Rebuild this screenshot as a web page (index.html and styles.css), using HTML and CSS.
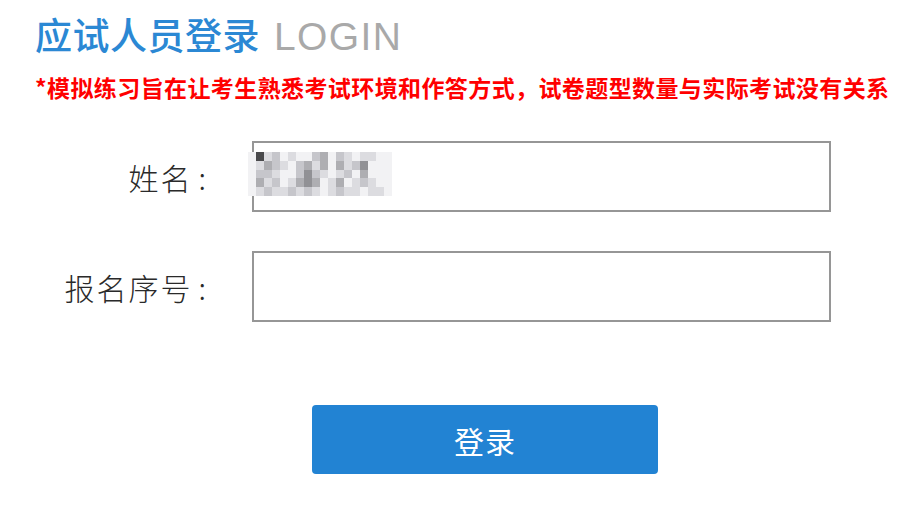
FILE: index.html
```html
<!DOCTYPE html>
<html lang="zh-CN">
<head>
<meta charset="utf-8">
<title>应试人员登录</title>
<link rel="stylesheet" href="styles.css">
</head>
<body>
<div class="page">
  <h1 class="title"><span class="title-cn">应试人员登录</span><span class="title-en">LOGIN</span></h1>
  <p class="notice">*模拟练习旨在让考生熟悉考试环境和作答方式，试卷题型数量与实际考试没有关系</p>
  <form class="form">
    <label class="label" for="name">姓名<span class="colon">:</span></label>
    <div class="field">
      <input class="input" id="name" type="text">
      <div class="mosaic">
        <span class="m0"></span><span class="m5"></span><span class="m1"></span><span class="m2"></span><span class="m0"></span><span class="m1"></span><span class="m0"></span><span class="m0"></span><span class="m2"></span><span class="m3"></span><span class="m0"></span><span class="m2"></span><span class="m1"></span><span class="m0"></span><span class="m1"></span><span class="m1"></span><span class="m0"></span><span class="m0"></span>
        <span class="m0"></span><span class="m1"></span><span class="m3"></span><span class="m2"></span><span class="m1"></span><span class="m0"></span><span class="m2"></span><span class="m3"></span><span class="m1"></span><span class="m3"></span><span class="m0"></span><span class="m3"></span><span class="m1"></span><span class="m2"></span><span class="m4"></span><span class="m0"></span><span class="m0"></span><span class="m0"></span>
        <span class="m0"></span><span class="m2"></span><span class="m2"></span><span class="m1"></span><span class="m0"></span><span class="m0"></span><span class="m2"></span><span class="m4"></span><span class="m2"></span><span class="m1"></span><span class="m0"></span><span class="m1"></span><span class="m2"></span><span class="m0"></span><span class="m3"></span><span class="m0"></span><span class="m0"></span><span class="m0"></span>
        <span class="m0"></span><span class="m3"></span><span class="m1"></span><span class="m2"></span><span class="m0"></span><span class="m1"></span><span class="m3"></span><span class="m4"></span><span class="m3"></span><span class="m0"></span><span class="m1"></span><span class="m3"></span><span class="m0"></span><span class="m1"></span><span class="m2"></span><span class="m1"></span><span class="m0"></span><span class="m0"></span>
        <span class="m0"></span><span class="m1"></span><span class="m2"></span><span class="m1"></span><span class="m1"></span><span class="m2"></span><span class="m1"></span><span class="m2"></span><span class="m1"></span><span class="m0"></span><span class="m1"></span><span class="m2"></span><span class="m1"></span><span class="m1"></span><span class="m0"></span><span class="m1"></span><span class="m1"></span><span class="m0"></span>
      </div>
    </div>
    <label class="label" for="seq">报名序号<span class="colon">:</span></label>
    <div class="field">
      <input class="input" id="seq" type="text">
    </div>
    <div class="actions">
      <button class="btn" type="button">登录</button>
    </div>
  </form>
</div>
</body>
</html>
```

FILE: styles.css
```css
html, body {
  margin: 0;
  padding: 0;
  background: #ffffff;
}

body {
  font-family: "Noto Sans CJK SC", "Noto Sans", sans-serif;
  overflow: hidden;
}

.page {
  padding-top: 12px;
  width: 899px;
  overflow: hidden;
}

.title {
  margin: 0;
  padding-left: 35px;
  display: flex;
  align-items: baseline;
  font-weight: normal;
  line-height: 44px;
  white-space: nowrap;
}

.title-cn {
  font-size: 37px;
  font-weight: 500;
  color: #2b88d4;
  letter-spacing: 0.5px;
}

.title-en {
  font-family: "Liberation Sans", Arial, sans-serif;
  font-size: 39px;
  color: #a9a9a9;
  letter-spacing: 1.4px;
  margin-left: 14px;
}

.notice {
  margin: 14px 0 0 0;
  padding-left: 35px;
  font-size: 23px;
  line-height: 28px;
  font-weight: bold;
  color: #ff0000;
  white-space: nowrap;
  letter-spacing: 0.4px;
}

.form {
  margin-top: 40px;
  display: grid;
  grid-template-columns: 210px 579px;
  column-gap: 42px;
  row-gap: 39px;
}

.label {
  display: flex;
  align-items: center;
  justify-content: flex-end;
  padding-right: 4px;
  font-size: 30px;
  font-weight: 300;
  color: #2a2a2a;
  letter-spacing: 2px;
}

.colon {
  margin-left: 6px;
  letter-spacing: 0;
}

.field {
  position: relative;
  height: 71px;
}

.input {
  box-sizing: border-box;
  width: 100%;
  height: 100%;
  margin: 0;
  border: 2px solid #969696;
  background: #ffffff;
  padding: 0 10px;
  font-size: 28px;
  outline: none;
}

.mosaic {
  position: absolute;
  left: -4px;
  top: 11px;
  display: grid;
  grid-template-columns: repeat(18, 8px);
  grid-auto-rows: 8.8px;
}

.m0 { background: #f2f2f4; }
.m1 { background: #dcdce0; }
.m2 { background: #c6c6cb; }
.m3 { background: #aeaeb2; }
.m4 { background: #919195; }
.m5 { background: #4a4a4c; }

.actions {
  grid-column: 1 / 3;
  margin-top: 44px;
  padding-left: 312px;
}

.btn {
  width: 346px;
  height: 69px;
  border: none;
  border-radius: 4px;
  background: #2283d3;
  color: #ffffff;
  font-family: "Noto Sans CJK SC", sans-serif;
  font-size: 30px;
  letter-spacing: 1px;
  cursor: pointer;
}
```
